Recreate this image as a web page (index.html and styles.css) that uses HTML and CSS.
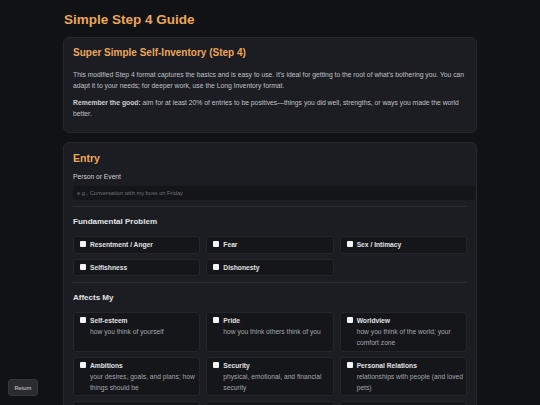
FILE: index.html
```html
<!DOCTYPE html>
<html lang="en">
<head>
<meta charset="utf-8">
<title>Simple Step 4 Guide</title>
<link rel="stylesheet" href="styles.css">
</head>
<body>
<main class="page">
  <h1 class="page-title">Simple Step 4 Guide</h1>

  <section class="card">
    <h2 class="card-title">Super Simple Self-Inventory (Step 4)</h2>
    <p class="text">This modified Step 4 format captures the basics and is easy to use. It's ideal for getting to the root of what's bothering you. You can adapt it to your needs; for deeper work, use the Long Inventory format.</p>
    <p class="text"><strong>Remember the good:</strong> aim for at least 20% of entries to be positives—things you did well, strengths, or ways you made the world better.</p>
  </section>

  <section class="card">
    <h2 class="card-title entry-title">Entry</h2>
    <div class="section">
      <label class="field-label" for="person">Person or Event</label>
      <input class="field-input" id="person" type="text" placeholder="e.g., Conversation with my boss on Friday">
    </div>

    <div class="section">
      <h3 class="section-title">Fundamental Problem</h3>
      <div class="grid">
        <label class="option"><input class="check" type="checkbox"><span class="option-body"><span class="option-name">Resentment / Anger</span></span></label>
        <label class="option"><input class="check" type="checkbox"><span class="option-body"><span class="option-name">Fear</span></span></label>
        <label class="option"><input class="check" type="checkbox"><span class="option-body"><span class="option-name">Sex / Intimacy</span></span></label>
        <label class="option"><input class="check" type="checkbox"><span class="option-body"><span class="option-name">Selfishness</span></span></label>
        <label class="option"><input class="check" type="checkbox"><span class="option-body"><span class="option-name">Dishonesty</span></span></label>
      </div>
    </div>

    <div class="section">
      <h3 class="section-title">Affects My</h3>
      <div class="grid">
        <label class="option"><input class="check" type="checkbox"><span class="option-body"><span class="option-name">Self-esteem</span><span class="option-desc">how you think of yourself</span></span></label>
        <label class="option"><input class="check" type="checkbox"><span class="option-body"><span class="option-name">Pride</span><span class="option-desc">how you think others think of you</span></span></label>
        <label class="option"><input class="check" type="checkbox"><span class="option-body"><span class="option-name">Worldview</span><span class="option-desc">how you think of the world; your comfort zone</span></span></label>
        <label class="option"><input class="check" type="checkbox"><span class="option-body"><span class="option-name">Ambitions</span><span class="option-desc">your desires, goals, and plans; how things should be</span></span></label>
        <label class="option"><input class="check" type="checkbox"><span class="option-body"><span class="option-name">Security</span><span class="option-desc">physical, emotional, and financial security</span></span></label>
        <label class="option"><input class="check" type="checkbox"><span class="option-body"><span class="option-name">Personal Relations</span><span class="option-desc">relationships with people (and loved pets)</span></span></label>
        <label class="option"><input class="check" type="checkbox"><span class="option-body"><span class="option-name">Sex Relations</span><span class="option-desc">intimate and sexual relationships</span></span></label>
        <label class="option"><input class="check" type="checkbox"><span class="option-body"><span class="option-name">Emotional Security</span><span class="option-desc">feeling safe and stable inside</span></span></label>
        <label class="option"><input class="check" type="checkbox"><span class="option-body"><span class="option-name">Financial Security</span><span class="option-desc">money, work, and material needs</span></span></label>
      </div>
    </div>
  </section>
</main>
<button class="return-btn" type="button">Return</button>
</body>
</html>
```
FILE: styles.css
```css
* { box-sizing: border-box; }

html, body {
  margin: 0;
  padding: 0;
}

body {
  background: #111216;
  color: #c3c5ca;
  font-family: "Liberation Sans", Arial, sans-serif;
  font-size: 6.7px;
  line-height: 11px;
}

.page {
  width: 414px;
  margin: 0 auto;
  padding-top: 12px;
}

.page-title {
  margin: 0 0 9px 1px;
  font-size: 13.5px;
  line-height: 16px;
  font-weight: 700;
  color: #eca65d;
}

.card {
  background: #1c1d22;
  border: 1px solid #26282d;
  border-radius: 6px;
  padding: 9px 9px 7px;
  margin-bottom: 9px;
}

.card-title {
  margin: 0 0 10px;
  font-size: 10px;
  line-height: 12px;
  font-weight: 700;
  color: #eca65d;
}

.entry-title {
  font-size: 10.5px;
  margin-bottom: 7px;
}

.text {
  margin: 0 0 6px;
  font-size: 6.78px;
  color: #bfc1c6;
}

.text strong {
  color: #cdcfd3;
}

.section {
  padding-bottom: 6px;
  border-bottom: 1px solid #2a2c31;
  margin-bottom: 10px;
}

.field-label {
  display: block;
  margin-bottom: 4px;
  color: #cfd1d5;
}

.field-input {
  display: block;
  box-sizing: content-box;
  width: 100%;
  height: 14px;
  padding: 0 4px;
  margin: 0;
  border: none;
  border-radius: 3px;
  background: #141519;
  color: #d0d2d6;
  font-family: "Liberation Sans", Arial, sans-serif;
  font-size: 5.7px;
  outline: none;
}

.field-input::placeholder {
  color: #6e7279;
}

.section-title {
  margin: 0 0 9px;
  font-size: 8px;
  line-height: 10px;
  font-weight: 700;
  color: #e3e4e7;
}

.grid {
  display: grid;
  grid-template-columns: repeat(3, 1fr);
  gap: 5px 6px;
}

.option {
  display: flex;
  align-items: flex-start;
  gap: 4px;
  padding: 3px 2px 2.5px 6px;
  background: #15161a;
  border: 1px solid #24262b;
  border-radius: 3px;
}

.check {
  appearance: none;
  -webkit-appearance: none;
  flex: none;
  width: 6px;
  height: 6px;
  margin: 1px 0 0;
  background: #f4f4f5;
  border-radius: 1px;
}

.option-body {
  display: flex;
  flex-direction: column;
  min-width: 0;
}

.option-name {
  font-weight: 700;
  line-height: 10px;
  color: #e1e2e5;
}

.option-desc {
  color: #a4a7ad;
  line-height: 11px;
}

.return-btn {
  position: fixed;
  left: 8px;
  bottom: 9px;
  width: 30px;
  height: 17px;
  padding: 0;
  border: 1px solid #34363b;
  border-radius: 3px;
  background: #2b2c30;
  color: #d2d3d6;
  font-family: "Liberation Sans", Arial, sans-serif;
  font-size: 5.7px;
}
```
